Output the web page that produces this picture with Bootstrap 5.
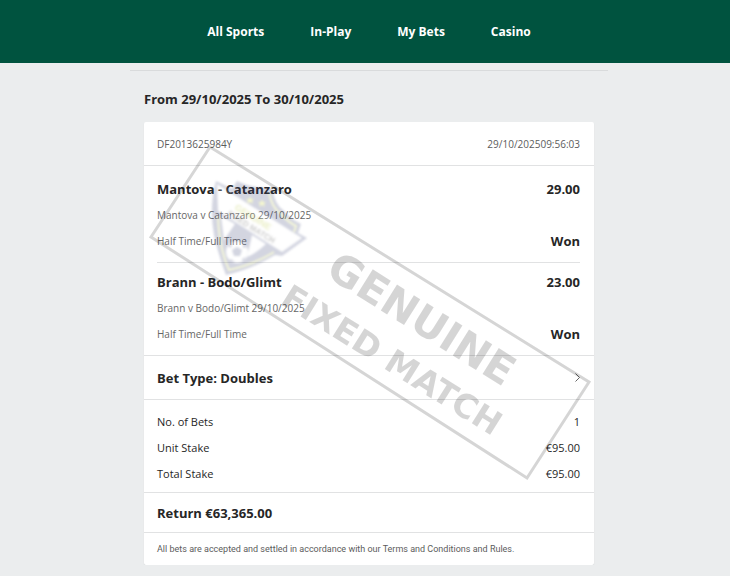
<!DOCTYPE html>
<html lang="en">
<head>
<meta charset="utf-8">
<meta name="viewport" content="width=device-width, initial-scale=1">
<title>My Bets</title>
<link href="https://cdn.jsdelivr.net/npm/bootstrap@5.3.0/dist/css/bootstrap.min.css" rel="stylesheet">
<style>
body { background: #ebedee; color: #262626; font-family: "Open Sans", "Noto Sans", sans-serif; font-size: 11px; line-height: 18px; }
.site-head { background: #00533f; min-height: 63px; }
.site-menu { gap: 46px; }
.site-menu a { color: #fff; font-weight: 700; font-size: 12px; }
.history { max-width: 486px; padding: 7px 0 0 8px; }
.history-body { border-top: 1px solid #d9dbdc; padding: 18px 14px 0; }
.heading { font-size: 13px; font-weight: 700; line-height: 20px; margin: 0; }
.slip { background: #fff; border-radius: 2px; box-shadow: 0 1px 1px #cfd3d5; margin-top: 13px; }
.part { padding: 0 14px 0 13px; border-top: 1px solid #e1e2e3; }
.part:first-child { border-top: 0; }
.slip-top { min-height: 43px; font-size: 10px; color: #5c5c5c; }
.event { padding: 10px 0 8px; line-height: 26px; }
.event + .event { border-top: 1px solid #e1e2e3; padding: 6px 0 8px; }
.event .heading { line-height: 26px; }
.detail { font-size: 10px; color: #666; }
.outcome { font-size: 13px; font-weight: 700; }
.kind { min-height: 44px; }
.kind:focus-visible { outline: 2px solid #00533f; }
.totals { padding-top: 9px; padding-bottom: 5px; }
.totals div { line-height: 26px; }
.returns { min-height: 40px; }
.terms { min-height: 33px; font-family: Roboto, "Open Sans", sans-serif; font-size: 9px; color: #5c5c5c; }
.stamp { pointer-events: none; }
.crest { filter: blur(1px); }
</style>
<script src="https://cdn.jsdelivr.net/npm/bootstrap@5.3.0/dist/js/bootstrap.bundle.min.js"></script>
</head>
<body>
<header class="site-head d-flex align-items-center justify-content-center ps-2">
  <nav class="site-menu d-flex flex-wrap" aria-label="Main">
    <a class="text-decoration-none" href="#sports">All Sports</a>
    <a class="text-decoration-none" href="#inplay">In-Play</a>
    <a class="text-decoration-none" href="#bets">My Bets</a>
    <a class="text-decoration-none" href="#casino">Casino</a>
  </nav>
</header>
<main class="history mx-auto">
  <div class="history-body">
    <h1 class="heading">From 29/10/2025 To 30/10/2025</h1>
    <section class="slip position-relative">
      <div class="part slip-top d-flex align-items-center justify-content-between">
        <span>DF2013625984Y</span>
        <span>29/10/2025<span>09:56:03</span></span>
      </div>
      <div class="part">
        <article class="event">
          <div class="d-flex justify-content-between"><h2 class="heading">Mantova - Catanzaro</h2><span class="outcome">29.00</span></div>
          <div class="detail">Mantova v Catanzaro 29/10/2025</div>
          <div class="d-flex justify-content-between"><span class="detail">Half Time/Full Time</span><span class="outcome">Won</span></div>
        </article>
        <article class="event">
          <div class="d-flex justify-content-between"><h2 class="heading">Brann - Bodo/Glimt</h2><span class="outcome">23.00</span></div>
          <div class="detail">Brann v Bodo/Glimt 29/10/2025</div>
          <div class="d-flex justify-content-between"><span class="detail">Half Time/Full Time</span><span class="outcome">Won</span></div>
        </article>
      </div>
      <button type="button" class="part kind d-flex w-100 align-items-center justify-content-between bg-transparent border-start-0 border-end-0 border-bottom-0 text-reset">
        <span class="heading">Bet Type: Doubles</span>
        <svg width="5" height="9" viewBox="0 0 5 9" fill="none" stroke="#666" aria-hidden="true"><path d="M.5.5l4 4-4 4"/></svg>
      </button>
      <div class="part totals">
        <div class="d-flex justify-content-between"><span>No. of Bets</span><span>1</span></div>
        <div class="d-flex justify-content-between"><span>Unit Stake</span><span>€95.00</span></div>
        <div class="d-flex justify-content-between"><span>Total Stake</span><span>€95.00</span></div>
      </div>
      <div class="part returns d-flex align-items-center"><strong class="heading">Return €63,365.00</strong></div>
      <div class="part terms d-flex align-items-center">All bets are accepted and settled in accordance with our Terms and Conditions and Rules.</div>
      <svg class="stamp position-absolute top-0 start-0 w-100 h-100" viewBox="0 0 450 443" aria-hidden="true">
        <g opacity=".16">
          <path d="M66 25L445 260L383 356L7 115Z" fill="none" stroke="#000" stroke-width="3"/>
          <g font-family="DejaVu Sans, sans-serif" font-weight="700">
            <text transform="translate(180 153) rotate(32)" font-size="42">GENUINE</text>
            <text transform="translate(135 181) rotate(32)" font-size="33">FIXED MATCH</text>
          </g>
        </g>
        <g class="crest" opacity=".22">
          <path d="M72 59L88 67L93 59Q110 67 128 66Q131 83 139 88Q146 97 157 102L154 111L163 116L138 134L131 133Q106 148 82 153Q75 135 70 113Q65 84 72 59Z" fill="#3b4478"/>
          <path d="M74 94Q75 126 85 148Q111 142 130 130M125 71Q128 86 137 92Q144 100 152 104L150 110" fill="none" stroke="#d2dc5a" stroke-width="2"/>
          <path d="M73 62L158 116L138 130L74 89Z" fill="#fff"/>
          <path d="M77 94L91 102L80 118ZM108 113L122 122Q111 132 103 135Z" fill="#fff"/>
          <circle cx="93" cy="130" r="11" fill="#fff"/>
          <path d="M93 125l5 3-2 6h-6l-2-6ZM84 124l4-3-1 5ZM99 121l4 4-4 1ZM87 137l4 3-6-1ZM98 137l4-2-3 5Z" fill="#3b4478"/>
          <path d="M106 74l1 3h3l-2 2 1 3-3-2-3 2 1-3-2-2h3ZM118 77l1 3h3l-2 2 1 3-3-2-3 2 1-3-2-2h3Z" fill="#d2dc2a"/>
          <g font-family="Liberation Sans, sans-serif" font-weight="700">
            <text transform="translate(90 87) rotate(32)" font-size="9" fill="#a5b800">GENUINE</text>
            <text transform="translate(83 93) rotate(32)" font-size="8" fill="#222">FIXED MATCH</text>
          </g>
        </g>
      </svg>
    </section>
  </div>
</main>
</body>
</html>
